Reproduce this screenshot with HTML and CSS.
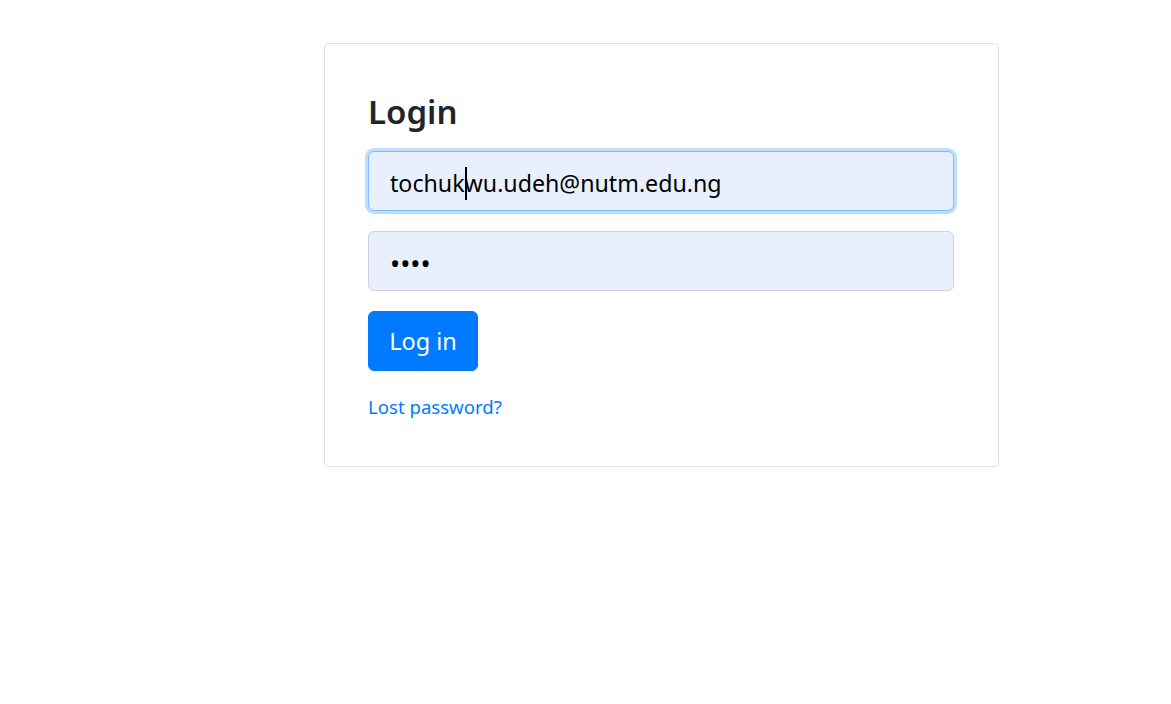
FILE: index.html
```html
<!DOCTYPE html>
<html lang="en">
<head>
<meta charset="utf-8">
<title>Login</title>
<link rel="stylesheet" href="styles.css">
</head>
<body>
<div class="page">
  <div class="card">
    <h4 class="title">Login</h4>
    <form class="form">
      <div class="field focused">tochuk<span class="caret"></span>wu.udeh@nutm.edu.ng</div>
      <div class="field password">••••</div>
      <button type="button" class="btn">Log in</button>
      <a class="link" href="#">Lost password?</a>
    </form>
  </div>
</div>
</body>
</html>
```
FILE: styles.css
```css
* { box-sizing: border-box; }
html, body { margin: 0; padding: 0; background: #fff; }
body {
  font-family: "Noto Sans", "Open Sans", "Liberation Sans", sans-serif;
  color: #212529;
}
.page {
  padding: 43px 0 0 324px;
}
.card {
  width: 675px;
  height: 424px;
  border: 1px solid #dfdfdf;
  border-radius: 5px;
  padding: 44px 43px 40px 43px;
  background: #fff;
}
.title {
  margin: 0;
  font-size: 33px;
  font-weight: 600;
  line-height: 48px;
  color: #212529;
  height: 63px;
}
.form {
  display: flex;
  flex-direction: column;
  align-items: flex-start;
  gap: 20px;
}
.field {
  width: 586px;
  height: 60px;
  background: #e8f0fe;
  border: 1px solid #ced4da;
  border-radius: 6px;
  padding: 0 21px;
  font-size: 23.2px;
  line-height: 62px;
  color: #000;
  white-space: nowrap;
  overflow: hidden;
}
.field.focused {
  border-color: #80bdff;
  box-shadow: 0 0 0 3px rgba(0, 123, 255, 0.25);
}
.caret {
  display: inline-block;
  width: 2px;
  height: 33px;
  background: #000;
  vertical-align: middle;
  margin-right: -2px;
  position: relative;
  top: -2px;
}
.password {
  font-size: 27px;
  line-height: 64px;
}
.btn {
  height: 60px;
  width: 110px;
  padding: 0;
  border: 1px solid #007bff;
  border-radius: 6px;
  background: #007bff;
  color: #fff;
  font-family: inherit;
  font-size: 23.5px;
  line-height: 58px;
  cursor: pointer;
}
.link {
  margin-top: 4px;
  font-size: 18.6px;
  line-height: 24px;
  color: #007bff;
  text-decoration: none;
}
```
